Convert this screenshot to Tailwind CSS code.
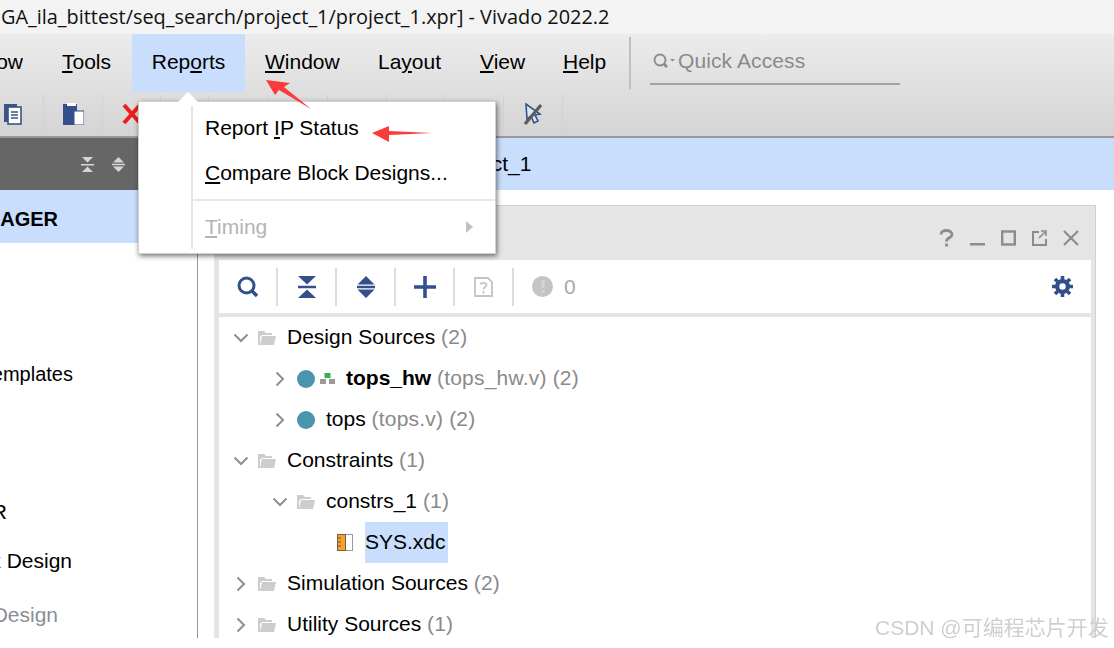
<!DOCTYPE html>
<html lang="en">
<head>
    <meta charset="UTF-8">
    <title>Vivado 2022.2</title>
    <script src="https://cdn.jsdelivr.net/npm/@tailwindcss/browser@4"></script>
</head>
<body class="bg-white">
<div class="relative w-[1114px] h-[648px] overflow-hidden bg-white font-['Liberation_Sans',sans-serif] text-[21px] text-black">

    <!-- Title bar -->
    <div class="h-[34px] bg-[#f3f3f3] pl-[1px] pb-[1px] flex items-center whitespace-nowrap font-['Open_Sans',sans-serif] text-[19.900px] text-[#111]">GA_ila_bittest/seq_search/project_1/project_1.xpr] - Vivado 2022.2</div>

    <!-- Menu + toolbar -->
    <div class="h-[104px] border-b-2 border-[#999] bg-gradient-to-b from-[#ececec] to-[#d4d4d4]">
        <div class="h-[58px] flex items-center whitespace-nowrap">
            <div class="w-[23px] flex justify-end overflow-hidden shrink-0 h-full items-center pb-[2px]"><span>Flow</span></div>
            <span class="ml-[39px] w-[50px] pb-[2px]"><span class="underline">T</span>ools</span>
            <span class="ml-[20px] w-[113px] h-[58px] bg-[#c9ddfc] flex items-center justify-center pb-[2px]">Rep<span class="underline">o</span>rts</span>
            <span class="ml-[20px] w-[74px] pb-[2px]"><span class="underline">W</span>indow</span>
            <span class="ml-[39px] w-[63px] pb-[2px]">La<span class="underline">y</span>out</span>
            <span class="ml-[39px] w-[45px] pb-[2px]"><span class="underline">V</span>iew</span>
            <span class="ml-[38px] w-[40px] pb-[2px]"><span class="underline">H</span>elp</span>
            <div class="ml-[26px] w-[2px] h-[52px] bg-[#c0c0c0]"></div>
            <div class="ml-[19px] w-[250px] h-[40px] mt-[3px] border-b-2 border-[#a3a3a3] flex items-center text-[#8a8a8a] pl-[2px] pb-[5px]">
                <svg class="w-[24px] h-[20px] shrink-0" viewBox="0 0 24 20" fill="none" stroke="#8a8a8a"><circle cx="8" cy="9" r="5.500" stroke-width="1.800"/><path d="M12 13l3 3" stroke-width="2.600"/><path d="M18 8h5l-2.500 2.500z" fill="#8a8a8a" stroke="none"/></svg>
                <span class="ml-[2px] tracking-[0.1px]">Quick Access</span>
            </div>
        </div>
        <div class="h-[44px] flex">
            <div class="w-[44px] border-r border-[#d2d2d2] my-[3px] flex items-center pl-[4px]">
                <svg class="w-[18px] h-[22px]" viewBox="0 0 18 22"><rect x="0" y="1" width="13" height="18" fill="#3a5488"/><rect x="4" y="4" width="13" height="17" fill="#fff" stroke="#3a5488" stroke-width="1.600"/><path d="M7 9h7M7 12h7M7 15h7" stroke="#3a5488" stroke-width="1.300"/></svg>
            </div>
            <div class="w-[59px] border-r border-[#d2d2d2] my-[3px] flex items-center justify-center">
                <svg class="w-[21px] h-[22px]" viewBox="0 0 21 22"><rect x="0" y="1" width="14" height="21" fill="#34508a"/><rect x="4" y="0" width="9" height="3" fill="#fff"/><rect x="11" y="8" width="10" height="14" fill="#fff" stroke="#34508a"/></svg>
            </div>
            <div class="w-[58px] my-[3px] flex items-center justify-center border-r border-[#d2d2d2]">
                <svg class="w-[20px] h-[22px]" viewBox="0 0 20 22"><path d="M2 2l16 18M18 2L2 20" stroke="#ee1c1c" stroke-width="4"/></svg>
            </div>
            <div class="w-[48px] my-[3px] border-r border-[#d2d2d2]"></div>
            <div class="w-[59px] my-[3px] border-r border-[#d2d2d2]"></div>
            <div class="w-[60px] my-[3px] border-r border-[#d2d2d2]"></div>
            <div class="w-[59px] my-[3px] border-r border-[#d2d2d2]"></div>
            <div class="w-[58px] my-[3px] border-r border-[#d2d2d2]"></div>
            <div class="w-[59px] my-[3px] border-r border-[#d2d2d2]"></div>
            <div class="w-[59px] my-[3px] border-r border-[#d2d2d2] flex items-center justify-center">
                <svg class="w-[22px] h-[22px]" viewBox="0 0 22 22"><path d="M4 1l1 15 4-3 3 7 4-2-3-6 5-1z" fill="#dfe6f2" stroke="#34508a" stroke-width="1.600"/><path d="M19 2L3 21" stroke="#5c5c5c" stroke-width="3.200"/></svg>
            </div>
        </div>
    </div>

    <!-- Workspace -->
    <div class="h-[500px] flex">

        <!-- Flow navigator -->
        <div class="w-[198px] shrink-0 border-r border-[#999] flex flex-col whitespace-nowrap overflow-hidden">
            <div class="h-[52px] bg-[#666] shrink-0 flex items-center">
                <div class="ml-[81px] w-[12px]">
                    <svg class="w-[13px] h-[15px]" viewBox="0 0 13 15" fill="#d5d5d5"><path d="M1 0h11L6.500 5.500zM0 7h13v1.500H0zM1 15h11L6.500 9.500z"/></svg>
                </div>
                <div class="ml-[19px]">
                    <svg class="w-[13px] h-[15px]" viewBox="0 0 13 15" fill="#d5d5d5"><path d="M6.500 0L12 5.500H1zM0 6.800h13v1.400H0zM6.500 15L1 9.500h11z"/></svg>
                </div>
            </div>
            <div class="h-[53px] bg-[#c9ddfc] shrink-0 pt-[4px] flex items-center">
                <div class="w-[58px] flex justify-end overflow-hidden font-bold text-[20px]"><span class="shrink-0">PROJECT MANAGER</span></div>
            </div>
            <div class="mt-[117px] h-[27px] w-[73px] flex items-center justify-end overflow-hidden text-[20px]"><span class="shrink-0">Language Templates</span></div>
            <div class="mt-[111px] h-[27px] w-[7px] flex items-center justify-end overflow-hidden"><span class="shrink-0">IP INTEGRATOR</span></div>
            <div class="mt-[22px] h-[27px] w-[72px] flex items-center justify-end overflow-hidden"><span class="shrink-0">Create Block Design</span></div>
            <div class="mt-[27px] h-[27px] w-[58px] flex items-center justify-end overflow-hidden text-[#8a8f96]"><span class="shrink-0">Generate Block Design</span></div>
        </div>

        <!-- Right side -->
        <div class="flex-1 flex flex-col min-w-0">
            <div class="h-[52px] bg-[#c9ddfc] shrink-0 flex items-center pl-[247px]">project_1</div>
            <div class="h-[15px] shrink-0"></div>

            <!-- Sources window -->
            <div class="w-[882px] ml-[16px] h-[433px] border-t border-r border-[#cfcfcf] bg-[#e5e5e5] flex flex-col">
                <div class="h-[54px] shrink-0 flex items-center justify-end pr-[15px] gap-[16px] pt-[10px]">
                    <svg class="w-[15px] h-[18px]" viewBox="0 0 15 18" fill="none" stroke="#8c8c8c" stroke-width="2.800"><path d="M2 5.500C2 2.500 4.500 1.500 7.500 1.500S13 3 13 5.500C13 9 7.500 8.500 7.500 12.500"/><path d="M7.500 14.500v3"/></svg>
                    <svg class="w-[15px] h-[18px]" viewBox="0 0 15 18"><rect x="0" y="14" width="15" height="2.500" fill="#8c8c8c"/></svg>
                    <svg class="w-[15px] h-[16px]" viewBox="0 0 15 16" fill="none" stroke="#8c8c8c" stroke-width="2.400"><rect x="1.200" y="1.500" width="12.600" height="13"/></svg>
                    <svg class="w-[15px] h-[16px]" viewBox="0 0 15 16" fill="none" stroke="#8c8c8c" stroke-width="2"><path d="M7 2H1v13h13V9"/><path d="M7 8l6-6M9 1h5v5" stroke-width="1.600"/></svg>
                    <svg class="w-[16px] h-[16px] mr-[1px]" viewBox="0 0 16 16" stroke="#8c8c8c" stroke-width="2.200"><path d="M1 1l14 14M15 1L1 15"/></svg>
                </div>
                <div class="ml-[5px] flex-1 flex flex-col min-h-0 w-[872px]">
                    <div class="h-[53px] shrink-0 bg-white flex items-center text-[#9a9a9a]">
                        <div class="w-[59px] h-[38px] border-r-2 border-[#dcdcdc] flex items-center justify-center">
                            <svg class="w-[22px] h-[22px]" viewBox="0 0 22 22" fill="none" stroke="#34508a"><circle cx="9.500" cy="9.500" r="7.500" stroke-width="3"/><path d="M15 15l5 5" stroke-width="3.600"/></svg>
                        </div>
                        <div class="w-[59px] h-[38px] border-r-2 border-[#dcdcdc] flex items-center justify-center">
                            <svg class="w-[18px] h-[22px]" viewBox="0 0 18 22" fill="#34508a"><path d="M0 0h18L9 8.500zM0 9.800h18v2.400H0zM0 22h18L9 13.500z"/></svg>
                        </div>
                        <div class="w-[59px] h-[38px] border-r-2 border-[#dcdcdc] flex items-center justify-center">
                            <svg class="w-[18px] h-[22px]" viewBox="0 0 18 22" fill="#34508a"><path d="M9 0l8.500 8.500h-17zM0 9.800h18v2.400H0zM9 22L.5 13.500h17z"/></svg>
                        </div>
                        <div class="w-[59px] h-[38px] border-r-2 border-[#dcdcdc] flex items-center justify-center">
                            <svg class="w-[22px] h-[22px]" viewBox="0 0 22 22" fill="#34508a"><path d="M9.200 0h3.600v9.200H22v3.600h-9.200V22H9.200v-9.200H0V9.200h9.200z"/></svg>
                        </div>
                        <div class="w-[59px] h-[38px] border-r-2 border-[#dcdcdc] flex items-center justify-center">
                            <svg class="w-[19px] h-[20px]" viewBox="0 0 19 20" fill="none" stroke="#c4c4c4" stroke-width="1.800"><path d="M1 1h13l4 4v14H1z"/><path d="M6.500 7.500C6.500 5.500 12.500 5 12.500 8c0 2-3 2-3 4.500M9.500 14v2.500" stroke-width="1.700"/></svg>
                        </div>
                        <div class="ml-[18px] w-[21px] h-[21px] rounded-full bg-[#c4c4c4] flex items-center justify-center">
                            <svg class="w-[4px] h-[13px]" viewBox="0 0 4 13" fill="#d4d4d4"><path d="M0 0h4l-.7 8H.7zM0.500 10h3v3h-3z"/></svg>
                        </div>
                        <span class="ml-[11px] text-[#a8a8a8]">0</span>
                        <svg class="ml-auto mr-[18px] w-[21px] h-[21px]" viewBox="0 0 21 21"><circle cx="10.500" cy="10.500" r="7.500" fill="#34508a"/><path d="M10.500 0v21M0 10.500h21M3 3l15 15M18 3L3 18" stroke="#34508a" stroke-width="3.600"/><circle cx="10.500" cy="10.500" r="3.200" fill="#fff"/></svg>
                    </div>
                    <div class="h-[4px] shrink-0"></div>

                    <!-- Source tree -->
                    <div class="flex-1 min-h-0 bg-white overflow-hidden whitespace-nowrap">
                        <div class="h-[41px] flex items-center pl-[14px]">
                            <svg class="w-[16px] h-[10px]" viewBox="0 0 16 10" fill="none" stroke="#8f8f8f" stroke-width="2"><path d="M1.500 1.500L8 8l6.500-6.500"/></svg>
                            <svg class="ml-[9px] w-[18px] h-[15px]" viewBox="0 0 18 15" fill="#cdcdcd"><path d="M0 1h6l2 2h6v2H4L2 7v8H0z"/><path d="M4 6h14l-2 9H2z"/></svg>
                            <span class="ml-[11px] pb-[2px]">Design Sources <span class="text-[#8a8a8a] tracking-[0.2px]">(2)</span></span>
                        </div>
                        <div class="h-[41px] flex items-center pl-[56px]">
                            <svg class="w-[10px] h-[16px]" viewBox="0 0 10 16" fill="none" stroke="#8f8f8f" stroke-width="2"><path d="M1.500 1.500L8 8l-6.500 6.500"/></svg>
                            <div class="ml-[12px] w-[18px] h-[18px] rounded-full bg-[#4a94ad]"></div>
                            <svg class="ml-[5px] w-[15px] h-[11px]" viewBox="0 0 15 11"><rect x="4.500" y="0" width="6" height="5" fill="#33b24e"/><rect x="0" y="6" width="6" height="5" fill="#9a9a9a"/><rect x="9" y="6" width="6" height="5" fill="#9a9a9a"/></svg>
                            <span class="ml-[11px] pb-[2px]"><span class="font-bold">tops_hw</span> <span class="text-[#8a8a8a] tracking-[0.2px]">(tops_hw.v) (2)</span></span>
                        </div>
                        <div class="h-[41px] flex items-center pl-[56px]">
                            <svg class="w-[10px] h-[16px]" viewBox="0 0 10 16" fill="none" stroke="#8f8f8f" stroke-width="2"><path d="M1.500 1.500L8 8l-6.500 6.500"/></svg>
                            <div class="ml-[12px] w-[18px] h-[18px] rounded-full bg-[#4a94ad]"></div>
                            <span class="ml-[11px] pb-[2px]">tops <span class="text-[#8a8a8a] tracking-[0.2px]">(tops.v) (2)</span></span>
                        </div>
                        <div class="h-[41px] flex items-center pl-[14px]">
                            <svg class="w-[16px] h-[10px]" viewBox="0 0 16 10" fill="none" stroke="#8f8f8f" stroke-width="2"><path d="M1.500 1.500L8 8l6.500-6.500"/></svg>
                            <svg class="ml-[9px] w-[18px] h-[15px]" viewBox="0 0 18 15" fill="#cdcdcd"><path d="M0 1h6l2 2h6v2H4L2 7v8H0z"/><path d="M4 6h14l-2 9H2z"/></svg>
                            <span class="ml-[11px] pb-[2px]">Constraints <span class="text-[#8a8a8a] tracking-[0.2px]">(1)</span></span>
                        </div>
                        <div class="h-[41px] flex items-center pl-[53px]">
                            <svg class="w-[16px] h-[10px]" viewBox="0 0 16 10" fill="none" stroke="#8f8f8f" stroke-width="2"><path d="M1.500 1.500L8 8l6.500-6.500"/></svg>
                            <svg class="ml-[9px] w-[18px] h-[15px]" viewBox="0 0 18 15" fill="#cdcdcd"><path d="M0 1h6l2 2h6v2H4L2 7v8H0z"/><path d="M4 6h14l-2 9H2z"/></svg>
                            <span class="ml-[11px] pb-[2px]">constrs_1 <span class="text-[#8a8a8a] tracking-[0.2px]">(1)</span></span>
                        </div>
                        <div class="h-[41px] flex items-center pl-[118px]">
                            <svg class="w-[16px] h-[17px]" viewBox="0 0 16 17"><rect x="0.500" y="0.500" width="15" height="16" fill="#fff" stroke="#9a9a9a"/><rect x="0.500" y="0.500" width="8" height="16" fill="#f5a030" stroke="#7a6038"/><path d="M1 4h3M1 8h3M1 12h3" stroke="#6b5a3a"/></svg>
                            <span class="ml-[12px] w-[83px] h-[41px] pb-[2px] flex items-center bg-[#c9ddfc]">SYS.xdc</span>
                        </div>
                        <div class="h-[41px] flex items-center pl-[17px]">
                            <svg class="w-[10px] h-[16px]" viewBox="0 0 10 16" fill="none" stroke="#8f8f8f" stroke-width="2"><path d="M1.500 1.500L8 8l-6.500 6.500"/></svg>
                            <svg class="ml-[12px] w-[18px] h-[15px]" viewBox="0 0 18 15" fill="#cdcdcd"><path d="M0 1h6l2 2h6v2H4L2 7v8H0z"/><path d="M4 6h14l-2 9H2z"/></svg>
                            <span class="ml-[11px] pb-[2px]">Simulation Sources <span class="text-[#8a8a8a] tracking-[0.2px]">(2)</span></span>
                        </div>
                        <div class="h-[41px] flex items-center pl-[17px]">
                            <svg class="w-[10px] h-[16px]" viewBox="0 0 10 16" fill="none" stroke="#8f8f8f" stroke-width="2"><path d="M1.500 1.500L8 8l-6.500 6.500"/></svg>
                            <svg class="ml-[12px] w-[18px] h-[15px]" viewBox="0 0 18 15" fill="#cdcdcd"><path d="M0 1h6l2 2h6v2H4L2 7v8H0z"/><path d="M4 6h14l-2 9H2z"/></svg>
                            <span class="ml-[11px] pb-[2px]">Utility Sources <span class="text-[#8a8a8a] tracking-[0.2px]">(1)</span></span>
                        </div>
                    </div>
                </div>
            </div>
        </div>
    </div>

    <!-- Reports dropdown -->
    <div class="absolute left-[138px] top-[101px] w-[358px] h-[153px] bg-white border border-[#d0d0d0] shadow-[1px_2px_5px_rgba(0,0,0,0.55)] flex">
        <svg class="absolute left-[39px] top-[-10px] w-[20px] h-[10px]" viewBox="0 0 20 10"><path d="M0 10L10 0l10 10z" fill="#fff"/></svg>
        <div class="w-[54px] shrink-0 border-r-2 border-[#e6e6e6] my-[4px]"></div>
        <div class="flex-1 flex flex-col pt-[4px]">
            <div class="h-[45px] pl-[12px] flex items-center">Report <span class="underline ml-[6px]">I</span>P Status</div>
            <div class="h-[45px] pl-[12px] flex items-center whitespace-pre"><span class="underline">C</span>ompare Block Designs...</div>
            <div class="h-[2px] bg-[#e6e6e6] mt-[4px]"></div>
            <div class="h-[53px] pl-[12px] pr-[22px] flex items-center justify-between text-[#b4b4b4]">
                <span><span class="underline">T</span>iming</span>
                <svg class="w-[7px] h-[12px]" viewBox="0 0 7 12"><path d="M0 0l7 6-7 6z" fill="#c0c0c0"/></svg>
            </div>
        </div>
    </div>

    <!-- Red annotation arrows -->
    <svg class="absolute left-[260px] top-[75px] w-[60px] h-[35px]" viewBox="0 0 60 35"><path d="M6 5l24 3-6 4 27 22-32-19-4 5z" fill="#fb3b3b"/></svg>
    <svg class="absolute left-[368px] top-[122px] w-[68px] h-[22px]" viewBox="0 0 68 22"><path d="M4 11l17-7v5l43 2-43 2v7z" fill="#fb3b3b"/></svg>

    <!-- Watermark -->
    <div class="absolute left-[875px] top-[616px] text-[21px] leading-[24px] whitespace-nowrap text-[#cfcfcf] blur-[0.4px] font-['Liberation_Sans','Noto_Sans_CJK_SC',sans-serif]">CSDN @可编程芯片开发</div>
</div>
</body>
</html>
